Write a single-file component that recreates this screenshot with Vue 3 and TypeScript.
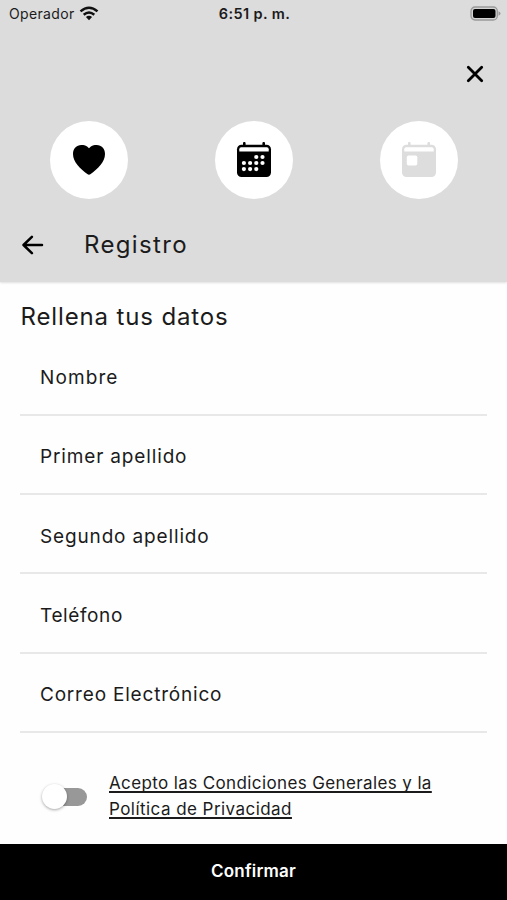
<script setup lang="ts">
import { ref } from 'vue'

interface Field {
  id: string
  label: string
  spacing: string
}

const fields: Field[] = [
  { id: 'nombre', label: 'Nombre', spacing: '1.1px' },
  { id: 'apellido1', label: 'Primer apellido', spacing: '0.85px' },
  { id: 'apellido2', label: 'Segundo apellido', spacing: '0.85px' },
  { id: 'telefono', label: 'Teléfono', spacing: '0.62px' },
  { id: 'correo', label: 'Correo Electrónico', spacing: '0.8px' },
]

const dots: [number, number][] = [
  [20.3, 15], [26.5, 15],
  [7.9, 21], [14.1, 21], [20.3, 21], [26.5, 21],
  [7.9, 27.1], [14.1, 27.1], [20.3, 27.1],
]

const accepted = ref(false)
</script>

<template>
  <main class="screen">
    <header class="header">
      <div class="status">
        <div class="carrier">
          <span>Operador</span>
          <svg width="20" height="15" viewBox="0 0 20 15">
            <g fill="none" stroke="#111" stroke-width="2.5">
              <path d="M1.5 5.4Q10 -2 18.500 5.400" />
              <path d="M4.700 8.700Q10 4.300 15.300 8.700" />
            </g>
            <path d="M6.900 11Q10 8.500 13.100 11L10 14.200Z" fill="#111" />
          </svg>
        </div>
        <span class="time">6:51 p. m.</span>
        <svg class="battery" width="31" height="15" viewBox="0 0 31 15">
          <rect x="1" y="1" width="26.300" height="13" rx="4" fill="#d4d4d4" stroke="#999" stroke-width="1.300" />
          <rect x="3" y="3" width="22.500" height="9" rx="2" fill="#000" />
          <path d="M28.500 5.200Q30.500 6 30.500 7.500T28.500 9.800Z" fill="#999" />
        </svg>
      </div>

      <button class="close" type="button" aria-label="Cerrar">
        <svg width="18" height="18" viewBox="0 0 18 18">
          <path d="M2.300 2.300 15.700 15.700M15.700 2.300 2.300 15.700" stroke="#000" stroke-width="2.800" stroke-linecap="round" />
        </svg>
      </button>

      <div class="steps">
        <div class="step">
          <svg width="34" height="32" viewBox="0 0 34 32">
            <path d="M17 4.300C14.500 1.300 11.900 1 9.300 1 4.500 1 1 4.600 1 10c0 8.300 7.200 14.300 14.300 20.100q1.700 1.300 3.400 0C25.800 24.300 33 18.300 33 10c0-5.400-3.500-9-8.300-9-2.600 0-5.200.3-7.700 3.300Z" />
          </svg>
        </div>
        <div class="step">
          <svg width="36" height="36" viewBox="0 0 36 36">
            <path d="M8.300 1.200v4M27.700 1.200v4" stroke="#000" stroke-width="2.600" stroke-linecap="round" />
            <rect x="1" y="2.800" width="34" height="32.200" rx="4.500" />
            <path d="M3.300 9.500V7.200Q3.300 5.300 5.200 5.300H30.800Q32.700 5.300 32.700 7.200V9.500Z" fill="#fff" />
            <circle v-for="([x, y], i) in dots" :key="i" :cx="x" :cy="y" r="2.100" fill="#fff" />
          </svg>
        </div>
        <div class="step">
          <svg width="36" height="36" viewBox="0 0 36 36">
            <path d="M8.300 1.200v4M27.700 1.200v4" stroke="#ddd" stroke-width="2.600" stroke-linecap="round" />
            <rect x="1" y="2.800" width="34" height="32.200" rx="4.500" fill="#ddd" />
            <path d="M3.300 9.500V7.200Q3.300 5.300 5.200 5.300H30.800Q32.700 5.300 32.700 7.200V9.500Z" fill="#fff" />
            <rect x="5.800" y="13.500" width="10.500" height="10" rx="1.700" fill="#fff" />
          </svg>
        </div>
      </div>

      <div class="title-bar">
        <svg width="22" height="20" viewBox="0 0 22 20">
          <path d="M20 10H1.500M9.900 1.800 1.500 10l8.400 8.200" fill="none" stroke="#000" stroke-width="2.500" stroke-linecap="round" stroke-linejoin="round" />
        </svg>
        <h1>Registro</h1>
      </div>
    </header>

    <section class="form">
      <h2>Rellena tus datos</h2>
      <div v-for="field in fields" :key="field.id" class="field">
        <span :style="{ letterSpacing: field.spacing }">{{ field.label }}</span>
      </div>
      <div class="terms">
        <button class="switch" :class="{ on: accepted }" type="button" aria-label="Aceptar" @click="accepted = !accepted">
          <span class="knob"></span>
        </button>
        <a><span class="line-one">Acepto las Condiciones Generales y la</span><br /><span class="line-two">Política de Privacidad</span></a>
      </div>
    </section>

    <button class="confirm" type="button">Confirmar</button>
  </main>
</template>

<style>
body {
  margin: 0;
  background: #fff;
}
</style>

<style scoped>
.screen {
  width: 507px;
  height: 900px;
  display: flex;
  flex-direction: column;
  overflow: hidden;
  background: #fefefe;
  color: #1b1b1b;
  font-family: Inter, "Liberation Sans", sans-serif;
}
button {
  border: 0;
  padding: 0;
  background: none;
  font-family: inherit;
}
svg {
  display: block;
  flex: none;
}
.header {
  height: 282px;
  flex: none;
  box-sizing: border-box;
  display: flex;
  flex-direction: column;
  background: #dcdcdc;
  box-shadow: 0 1px 2px rgba(0, 0, 0, 0.12);
}
.status {
  height: 27px;
  display: grid;
  grid-template-columns: 1fr auto 1fr;
  align-items: center;
  padding: 0 6px 0 9px;
  font-size: 14px;
}
.carrier {
  display: flex;
  align-items: center;
  gap: 4px;
  letter-spacing: 0.35px;
}
.time {
  margin-right: 1px;
  font-size: 14.500px;
  font-weight: 600;
  letter-spacing: 0.4px;
}
.battery {
  justify-self: end;
}
.close {
  align-self: flex-end;
  margin: 38px 23px 0 0;
}
.steps {
  display: flex;
  justify-content: space-between;
  margin: 38px 49px 0 50px;
}
.step {
  width: 78px;
  height: 78px;
  border-radius: 50%;
  display: flex;
  align-items: center;
  justify-content: center;
  background: #fff;
}
.title-bar {
  display: flex;
  align-items: center;
  gap: 40px;
  height: 40px;
  margin: 26px 0 0 22px;
}
h1,
h2 {
  margin: 0;
  font-size: 24px;
  font-weight: 400;
  line-height: 30px;
  letter-spacing: 1.350px;
}
.form {
  flex: 1;
  padding: 20px 20px 0;
}
h2 {
  padding: 0 0 4.200px 0.500px;
  letter-spacing: 0.860px;
}
.field {
  height: 79.400px;
  box-sizing: border-box;
  display: flex;
  align-items: center;
  padding: 5px 20px 0;
  border-bottom: 2px solid #e8e8e8;
  font-size: 19px;
}
.terms {
  display: flex;
  align-items: center;
  gap: 22px;
  padding: 38px 0 0 22px;
}
.switch {
  width: 45px;
  height: 26px;
  display: grid;
  align-items: center;
  flex: none;
}
.switch::before,
.knob {
  grid-area: 1 / 1;
}
.switch::before {
  content: "";
  height: 18px;
  margin-left: 8px;
  border-radius: 9px;
  background: #989898;
}
.knob {
  z-index: 1;
  width: 25px;
  height: 25px;
  border-radius: 50%;
  background: #fff;
  box-shadow: 0 1px 3px rgba(0, 0, 0, 0.35);
}
.switch.on .knob {
  margin-left: auto;
}
a {
  font-size: 17px;
  line-height: 25.500px;
  white-space: nowrap;
  text-decoration: underline;
  text-decoration-thickness: 1.500px;
  text-underline-offset: 2px;
  text-decoration-skip-ink: none;
}
.line-one {
  letter-spacing: 0.380px;
}
.line-two {
  letter-spacing: 0.450px;
}
.confirm {
  height: 56.500px;
  flex: none;
  padding-bottom: 2px;
  background: #000;
  color: #fff;
  font-size: 17px;
  font-weight: 600;
  letter-spacing: 0.2px;
}
</style>
